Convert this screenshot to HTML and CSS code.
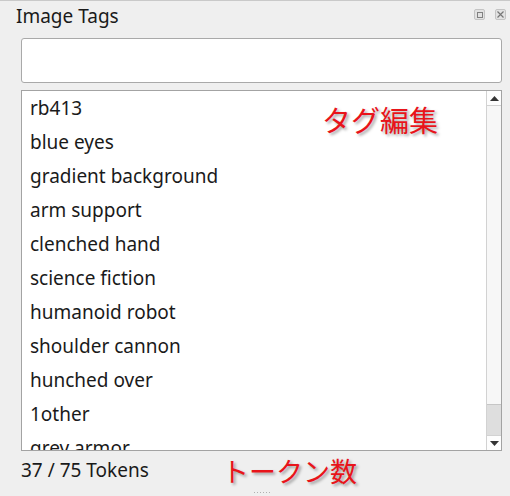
FILE: index.html
```html
<!DOCTYPE html>
<html>
<head>
<meta charset="utf-8">
<link rel="stylesheet" href="styles.css">
</head>
<body>

<div class="dock">
  <div class="dock-title">
    <span>Image Tags</span>
    <div class="dock-buttons">
      <span class="dock-btn float"><i></i></span>
      <span class="dock-btn close">
        <svg width="7" height="7" viewBox="0 0 7 7"><path d="M0.5 0.5 L6.5 6.5 M6.5 0.5 L0.5 6.5" stroke="#777" stroke-width="1.2"/></svg>
      </span>
    </div>
  </div>

  <div class="dock-body">
    <div class="tag-input"></div>

    <div class="tag-list">
      <div class="tag-items">
        <div>rb413</div>
        <div>blue eyes</div>
        <div>gradient background</div>
        <div>arm support</div>
        <div>clenched hand</div>
        <div>science fiction</div>
        <div>humanoid robot</div>
        <div>shoulder cannon</div>
        <div>hunched over</div>
        <div>1other</div>
        <div>grey armor</div>
      </div>
      <div class="vscroll">
        <div class="arrow up"><svg width="9" height="5" viewBox="0 0 9 5"><path d="M4.5 0 L9 5 L0 5 Z" fill="#333"/></svg></div>
        <div class="track"><div class="handle"></div></div>
        <div class="arrow down"><svg width="9" height="5" viewBox="0 0 9 5"><path d="M0 0 L9 0 L4.5 5 Z" fill="#333"/></svg></div>
      </div>
      <span class="note note-edit">タグ編集</span>
    </div>

    <div class="token-row">
      <span>37 / 75 Tokens</span>
      <span class="note note-count">トークン数</span>
    </div>
  </div>
  <div class="grip"></div>
</div>

</body>
</html>
```

FILE: styles.css
```css
html, body {
    margin: 0;
    padding: 0;
}

body {
    width: 510px;
    height: 496px;
    overflow: hidden;
    background: #efefef;
    font-family: "Noto Sans", "Open Sans", sans-serif;
    color: #1a1a1a;
}

.dock {
    height: 495px;
    border-top: 1px solid #c9c9c9;
    position: relative;
}

.dock-title {
    display: flex;
    align-items: center;
    justify-content: space-between;
    height: 29px;
    padding: 0 4px 0 16px;
    font-size: 19px;
}

.dock-buttons {
    display: flex;
    gap: 10px;
    margin-top: -2px;
}

.dock-btn {
    width: 9px;
    height: 9px;
    border: 1px solid #c4c4c4;
    border-radius: 2px;
    background: #e2e2e2;
    display: flex;
    align-items: center;
    justify-content: center;
}

.dock-btn.float i {
    display: block;
    width: 4px;
    height: 4px;
    border: 1px solid #808080;
}

.dock-body {
    padding: 8px 8px 0 21px;
}

.tag-input {
    height: 43px;
    background: #fff;
    border: 1px solid #a9a9a9;
    border-radius: 3px;
}

.tag-list {
    position: relative;
    display: flex;
    margin-top: 7px;
    height: 359px;
    background: #fff;
    border: 1px solid #a3a3a3;
}

.tag-items {
    flex: 1;
    overflow: hidden;
    padding-left: 8px;
    font-size: 19px;
    line-height: 34px;
}

.vscroll {
    width: 14px;
    display: flex;
    flex-direction: column;
    border-left: 1px solid #d2d2d2;
    background: #f7f7f7;
}

.vscroll .arrow {
    height: 14px;
    display: flex;
    align-items: center;
    justify-content: center;
    background: #fdfdfd;
}

.vscroll .arrow.up {
    border-bottom: 1px solid #d2d2d2;
}

.vscroll .arrow.down {
    border-top: 1px solid #d2d2d2;
}

.vscroll .track {
    flex: 1;
    display: flex;
    flex-direction: column;
    justify-content: flex-end;
}

.vscroll .handle {
    height: 30px;
    background: #dedede;
    border-top: 1px solid #c6c6c6;
}

.token-row {
    position: relative;
    height: 38px;
    display: flex;
    align-items: center;
    font-size: 19px;
}

/* red callouts drawn over the widgets */
.note {
    position: absolute;
    font-family: "Noto Sans CJK JP", sans-serif;
    color: #e8141a;
    text-shadow: 2px 2px 3px rgba(0, 0, 0, 0.35);
    white-space: nowrap;
}

.note-edit {
    left: 300px;
    top: 7px;
    font-size: 29px;
}

.note-count {
    left: 201px;
    top: 0;
    font-size: 27px;
}

.grip {
    position: absolute;
    left: 254px;
    bottom: 3px;
    width: 16px;
    height: 1px;
    background: repeating-linear-gradient(90deg, #b0b0b0 0 1px, transparent 1px 3px);
}
```
